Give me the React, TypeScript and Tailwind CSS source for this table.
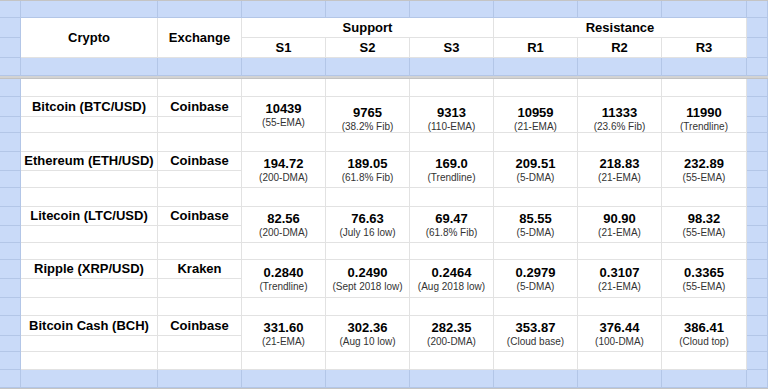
import React from 'react';

interface Level {
  value: string;
  note: string;
}

interface Row {
  name: string;
  exchange: string;
  levels: Level[];
  lowered?: boolean;
}

const ROWS: Row[] = [
  {
    name: 'Bitcoin (BTC/USD)',
    exchange: 'Coinbase',
    lowered: true,
    levels: [
      { value: '10439', note: '(55-EMA)' },
      { value: '9765', note: '(38.2% Fib)' },
      { value: '9313', note: '(110-EMA)' },
      { value: '10959', note: '(21-EMA)' },
      { value: '11333', note: '(23.6% Fib)' },
      { value: '11990', note: '(Trendline)' },
    ],
  },
  {
    name: 'Ethereum (ETH/USD)',
    exchange: 'Coinbase',
    levels: [
      { value: '194.72', note: '(200-DMA)' },
      { value: '189.05', note: '(61.8% Fib)' },
      { value: '169.0', note: '(Trendline)' },
      { value: '209.51', note: '(5-DMA)' },
      { value: '218.83', note: '(21-EMA)' },
      { value: '232.89', note: '(55-EMA)' },
    ],
  },
  {
    name: 'Litecoin (LTC/USD)',
    exchange: 'Coinbase',
    levels: [
      { value: '82.56', note: '(200-DMA)' },
      { value: '76.63', note: '(July 16 low)' },
      { value: '69.47', note: '(61.8% Fib)' },
      { value: '85.55', note: '(5-DMA)' },
      { value: '90.90', note: '(21-EMA)' },
      { value: '98.32', note: '(55-EMA)' },
    ],
  },
  {
    name: 'Ripple (XRP/USD)',
    exchange: 'Kraken',
    levels: [
      { value: '0.2840', note: '(Trendline)' },
      { value: '0.2490', note: '(Sept 2018 low)' },
      { value: '0.2464', note: '(Aug 2018 low)' },
      { value: '0.2979', note: '(5-DMA)' },
      { value: '0.3107', note: '(21-EMA)' },
      { value: '0.3365', note: '(55-EMA)' },
    ],
  },
  {
    name: 'Bitcoin Cash (BCH)',
    exchange: 'Coinbase',
    levels: [
      { value: '331.60', note: '(21-EMA)' },
      { value: '302.36', note: '(Aug 10 low)' },
      { value: '282.35', note: '(200-DMA)' },
      { value: '353.87', note: '(Cloud base)' },
      { value: '376.44', note: '(100-DMA)' },
      { value: '386.41', note: '(Cloud top)' },
    ],
  },
];

const blue = 'bg-[#c9daf8] border-r border-b border-[#b3c6e7]';
const white = 'bg-white border-r border-b border-[#e2e2e2]';
const center = 'flex items-center justify-center';

const BlueRow: React.FC = () => (
  <>
    {Array.from({ length: 10 }).map((_, i) => (
      <div key={i} className={blue} />
    ))}
  </>
);

// empty sheet row: blue margins, white cells in between
const BlankRow: React.FC = () => (
  <>
    <div className={blue} />
    {Array.from({ length: 8 }).map((_, i) => (
      <div key={i} className={white} />
    ))}
    <div className={blue} />
  </>
);

const App: React.FC = () => {
  return (
    <div className="w-[768px] h-[390px] overflow-hidden bg-white font-['Liberation_Sans',Arial,sans-serif] text-black">
      <div className="grid grid-cols-[21px_137px_84px_84px_84px_84px_84px_84px_85px_21px] grid-rows-[17px_20px_20px_18px_3px_18px_20px_16px_19px_19px_17px_19px_19px_17px_17px_19px_19px_18px_20px_16px_18px_18px] border-t border-[#c4c4c4]">
        {/* top band */}
        <BlueRow />

        {/* header */}
        <div className={blue} />
        <div className={`${white} ${center} row-span-2 text-[13px] font-bold`}>Crypto</div>
        <div className={`${white} ${center} row-span-2 text-[13px] font-bold`}>Exchange</div>
        <div className={`${white} ${center} col-span-3 text-[13px] font-bold`}>Support</div>
        <div className={`${white} ${center} col-span-3 text-[13px] font-bold`}>Resistance</div>
        <div className={blue} />

        <div className={blue} />
        {['S1', 'S2', 'S3', 'R1', 'R2', 'R3'].map((label) => (
          <div key={label} className={`${white} ${center} text-[13px] font-bold`}>
            {label}
          </div>
        ))}
        <div className={blue} />

        <BlueRow />

        {/* frozen divider */}
        <div className="col-span-10 bg-[#d3d3d3] border-b border-[#c2c2c2]" />

        {ROWS.map((row) => (
          <React.Fragment key={row.name}>
            <BlankRow />

            {/* name row, level cells span two rows */}
            <div className={blue} />
            <div className={`${white} ${center} text-[13px] font-bold whitespace-nowrap`}>{row.name}</div>
            <div className={`${white} ${center} text-[13px] font-bold`}>{row.exchange}</div>
            {row.levels.map((level, i) => (
              <div
                key={i}
                className={`${white} row-span-2 flex flex-col items-center justify-center ${row.lowered && i > 0 ? 'pt-2' : ''}`}
              >
                <span className="text-[13px] font-bold leading-[15px]">{level.value}</span>
                <span className="text-[10px] leading-[13px] text-[#333]">{level.note}</span>
              </div>
            ))}
            <div className={blue} />

            {/* trailing row */}
            <div className={blue} />
            <div className={white} />
            <div className={white} />
            <div className={blue} />
          </React.Fragment>
        ))}

        <BlankRow />

        {/* bottom band */}
        <BlueRow />
      </div>
      <div className="h-[2px] border-t border-[#c4c4c4] bg-white" />
    </div>
  );
};

export default App;
